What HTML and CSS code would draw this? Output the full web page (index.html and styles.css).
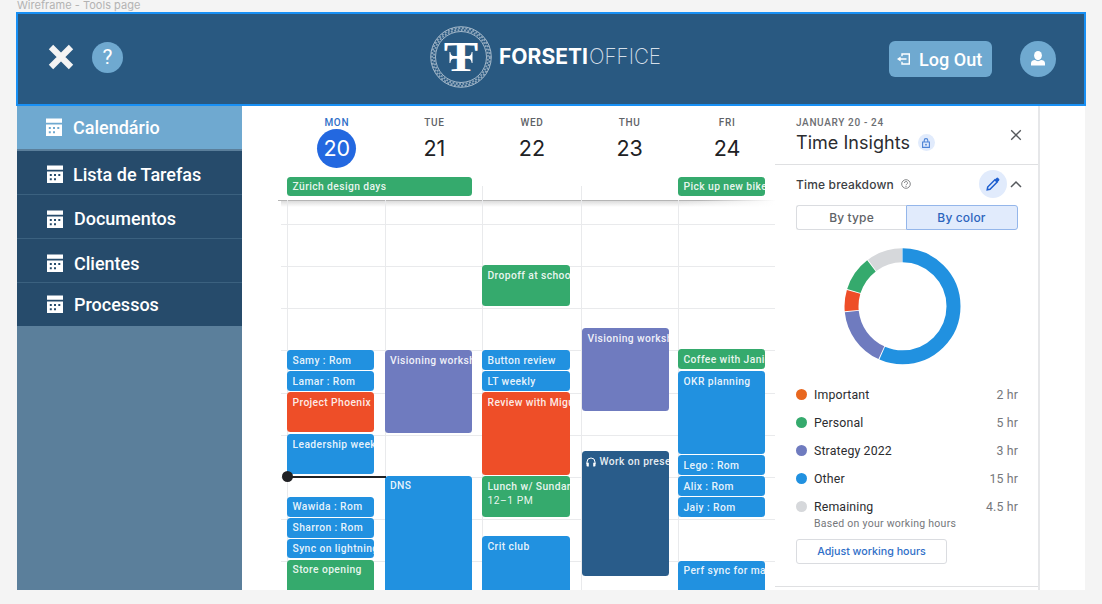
FILE: index.html
```html
<!DOCTYPE html>
<html lang="pt">
<head>
<meta charset="utf-8">
<title>Forseti Office</title>
<link rel="stylesheet" href="styles.css">
</head>
<body>
<svg class="defs" width="0" height="0" aria-hidden="true">
  <symbol id="table" viewBox="0 0 16 18">
    <path fill="#fff" fill-rule="evenodd" d="M0 .5h16v4.300H0zM0 6.500h16V18H0zM2.800 9h2v2h-2zM7 9h2v2H7zM11.300 9h2v2h-2zM2.800 13.200h2v2h-2zM7 13.200h2v2H7z"/>
  </symbol>
</svg>
<div class="frame-label">Wireframe - Tools page</div>
<header class="topbar">
  <svg class="close-menu" width="26" height="26" viewBox="0 0 26 26"><path d="M3 3 23 23M23 3 3 23" stroke="#f4f4f4" stroke-width="6.200" stroke-linejoin="round"/></svg>
  <span class="help">?</span>
  <svg class="logo" width="232" height="62" viewBox="0 0 232 62">
    <g fill="none" stroke="#c3d0dc">
      <circle cx="31" cy="31" r="30.300" stroke-width=".8"/>
      <circle cx="31" cy="31" r="25.500" stroke-width=".8"/>
      <circle cx="31" cy="31" r="28.900" stroke-width="1.800" stroke-dasharray="2 1.600" stroke-opacity=".65"/>
      <circle cx="31" cy="31" r="27" stroke-width="1.800" stroke-dasharray="1.870 1.500" stroke-dashoffset="1.500" stroke-opacity=".65"/>
    </g>
    <text class="logo-t" transform="translate(31 45) scale(1.230 1)" text-anchor="middle">T</text>
    <path fill="#fff" d="M19.500 26h.8q.6 4 3.200 4h15q2.600 0 3.200-4h.8v11h-.8q-.6-4.300-3.200-4.300h-15q-2.600 0-3.200 4.300h-.8z"/>
    <text class="logo-bold" x="69" y="37.600" textLength="89" lengthAdjust="spacingAndGlyphs">FORSETI</text>
    <text class="logo-thin" x="159" y="37.600" textLength="72" lengthAdjust="spacingAndGlyphs">OFFICE</text>
  </svg>
  <button class="logout">
    <svg width="14" height="12" viewBox="0 0 14 12"><path d="M5 3.200V1h7.300v10H5V8.800M9.500 6H2" fill="none" stroke="#fff" stroke-width="1.400"/><path d="M0 6l3.600-2.400v4.800z" fill="#fff"/></svg>
    <span>Log Out</span>
  </button>
  <span class="avatar">
    <svg width="14" height="15" viewBox="0 0 14 15"><ellipse cx="7" cy="4.600" rx="3.900" ry="4.600" fill="#fff"/><path d="M0 14.500v-2.300C0 10 2 9.200 4 9q3 2.300 6 0c2 .2 4 1 4 3.200v2.300z" fill="#fff"/></svg>
  </span>
</header>
<main class="page">
  <nav class="side">
    <a class="item active"><svg><use href="#table"/></svg>Calendário</a>
    <a class="item lista"><svg><use href="#table"/></svg>Lista de Tarefas</a>
    <a class="item"><svg><use href="#table"/></svg>Documentos</a>
    <a class="item"><svg><use href="#table"/></svg>Clientes</a>
    <a class="item last"><svg><use href="#table"/></svg>Processos</a>
  </nav>
  <section class="calendar">
    <div class="days">
      <div class="day today"><span>MON</span><b>20</b></div>
      <div class="day"><span>TUE</span><b>21</b></div>
      <div class="day"><span>WED</span><b>22</b></div>
      <div class="day"><span>THU</span><b>23</b></div>
      <div class="day"><span>FRI</span><b>24</b></div>
    </div>
    <div class="allday">
      <div class="ev green span">Zürich design days</div>
      <div class="tick"></div>
      <div class="tick"></div>
      <div class="ev green">Pick up new bike</div>
    </div>
    <div class="hours">
      <div class="col">
        <div class="ev blue" style="margin-top:150px;height:20px">Samy : Rom</div>
        <div class="ev blue" style="margin-top:1px;height:20px">Lamar : Rom</div>
        <div class="ev red" style="margin-top:1px;height:40px">Project Phoenix</div>
        <div class="ev blue" style="margin-top:2px;height:40px">Leadership week</div>
        <div class="now"><i></i></div>
        <div class="ev blue tight" style="margin-top:19px;height:20px">Wawida : Rom</div>
        <div class="ev blue tight" style="margin-top:1px;height:20px">Sharron : Rom</div>
        <div class="ev blue tight" style="margin-top:1px;height:19px">Sync on lightning</div>
        <div class="ev green cut tight" style="margin-top:2px;height:32px">Store opening</div>
      </div>
      <div class="col early">
        <div class="ev violet" style="margin-top:150px;height:83px">Visioning workshop</div>
        <div class="ev blue cut tight" style="margin-top:43px;height:115px">DNS</div>
      </div>
      <div class="col wide">
        <div class="ev green" style="margin-top:65px;height:41px">Dropoff at school</div>
        <div class="ev blue" style="margin-top:44px;height:20px">Button review</div>
        <div class="ev blue" style="margin-top:1px;height:20px">LT weekly</div>
        <div class="ev red" style="margin-top:1px;height:83px">Review with Miguel</div>
        <div class="ev green" style="margin-top:1px;height:41px">Lunch w/ Sundar<small>12–1 PM</small></div>
        <div class="ev blue cut" style="margin-top:19px;height:54px">Crit club</div>
      </div>
      <div class="col inset">
        <div class="ev violet" style="margin-top:128px;height:83px">Visioning workshop</div>
        <div class="ev navy" style="margin-top:40px;height:125px"><svg width="10" height="10" viewBox="0 0 10 10"><path d="M1 7V5a4 4 0 0 1 8 0v2" fill="none" stroke="#fff"/><path d="M.5 5.700h2.300V9.500H1.500a1 1 0 0 1-1-1zM9.500 5.700H7.200V9.500h1.300a1 1 0 0 0 1-1z" fill="#fff"/></svg>Work on presentation</div>
      </div>
      <div class="col">
        <div class="ev green" style="margin-top:149px;height:20px">Coffee with Janice</div>
        <div class="ev blue" style="margin-top:2px;height:83px">OKR planning</div>
        <div class="ev blue" style="margin-top:1px;height:20px">Lego : Rom</div>
        <div class="ev blue" style="margin-top:1px;height:20px">Alix : Rom</div>
        <div class="ev blue" style="margin-top:1px;height:20px">Jaiy : Rom</div>
        <div class="ev blue cut tight" style="margin-top:44px;height:29px">Perf sync for managers</div>
      </div>
    </div>
  </section>
  <aside class="insights">
    <div class="head">
      <div>
        <div class="range">JANUARY 20 - 24</div>
        <h2>Time Insights <span class="lock"><svg width="8" height="10" viewBox="0 0 8 10"><path d="M.6 4h6.800v5.400H.6zM2.200 4V2.400a1.800 1.800 0 0 1 3.600 0V4" fill="none" stroke="#4d83d6" stroke-width="1.100"/><circle cx="4" cy="6.700" r=".9" fill="#4d83d6"/></svg></span></h2>
      </div>
      <svg class="x" width="12" height="12" viewBox="0 0 12 12"><path d="M1.200 1.200l9.600 9.600M10.800 1.200l-9.600 9.600" stroke="#55585c" stroke-width="1.300"/></svg>
    </div>
    <div class="breakdown">
      <h3>Time breakdown</h3>
      <svg width="10" height="10" viewBox="0 0 10 10" fill="none" stroke="#77797c"><circle cx="5" cy="5" r="4.300" stroke-width=".9"/><path d="M3.500 4a1.500 1.500 0 1 1 2.300 1.200Q5 5.600 5 6.300M5 7v1" stroke-width=".9"/></svg>
      <span class="edit"><svg width="14" height="14" viewBox="0 0 14 14"><path d="M1.200 12.800l.5-2.800 7.200-7.200 2.300 2.300L4 12.300z" fill="none" stroke="#1f5fcf" stroke-width="1.500"/><path d="M8.800 2.600 10.500.9q.8-.7 1.600 0l1 1q.7.800 0 1.600l-1.700 1.700z" fill="#1f5fcf"/></svg></span>
      <svg class="chev" width="12" height="8" viewBox="0 0 12 8"><path d="M1 7l5-5 5 5" fill="none" stroke="#55585c" stroke-width="1.500"/></svg>
    </div>
    <div class="toggle"><span>By type</span><span class="on">By color</span></div>
    <svg class="donut" width="118" height="118" viewBox="-59.500 -59.300 118 118">
      <g fill="none" stroke-width="14" transform="rotate(-90)">
        <circle r="51" pathLength="360" stroke="#2191e0" stroke-dasharray="203.500 156.500"/>
        <circle r="51" pathLength="360" stroke="#6f7bbf" stroke-dasharray="59.500 300.500" stroke-dashoffset="-204.500"/>
        <circle r="51" pathLength="360" stroke="#ee4e28" stroke-dasharray="21.500 338.500" stroke-dashoffset="-265"/>
        <circle r="51" pathLength="360" stroke="#35aa6d" stroke-dasharray="35 325" stroke-dashoffset="-287.500"/>
        <circle r="51" pathLength="360" stroke="#d6d8db" stroke-dasharray="36 324" stroke-dashoffset="-323.500"/>
      </g>
    </svg>
    <ul class="legend">
      <li><i class="orange"></i>Important<em>2 hr</em></li>
      <li><i class="green"></i>Personal<em>5 hr</em></li>
      <li><i class="violet"></i>Strategy 2022<em>3 hr</em></li>
      <li><i class="blue"></i>Other<em>15 hr</em></li>
      <li><i class="grey"></i>Remaining<em>4.5 hr</em></li>
    </ul>
    <p class="note">Based on your working hours</p>
    <button class="adjust">Adjust working hours</button>
    <div class="rule"></div>
  </aside>
</main>
</body>
</html>
```

FILE: styles.css
```css
* { box-sizing: border-box; }
body { margin: 0; width: 1102px; height: 604px; overflow: hidden; background: #f4f4f4; font-family: Roboto, sans-serif; }
button { font: inherit; margin: 0; padding: 0; }
.defs { display: block; }
.frame-label { height: 12px; padding-left: 17px; font: 11px/11px Inter, sans-serif; letter-spacing: .03px; color: #b3b3b3; }
.topbar { display: flex; align-items: center; width: 1070px; height: 94px; margin-left: 16px; padding: 0 28px 0 30px; border: 2px solid #1890f5; background: #295981; }
.close-menu { margin: 0 0 4px 0; }
.help { width: 31px; height: 31px; margin: 0 0 4px 18px; border-radius: 50%; background: #6fa9d0; color: #fff; font-size: 21px; line-height: 30px; text-align: center; }
.logo { margin: 0 0 4px 307px; }
.logo-t { font: bold 42px "Liberation Serif", serif; fill: #fff; }
.logo-bold { font: 700 21px Inter, sans-serif; fill: #fff; }
.logo-thin { font: 200 21px Inter, sans-serif; fill: #d5dfe8; }
.logout { display: flex; align-items: center; width: 103px; height: 36px; margin-left: auto; padding-left: 8px; gap: 8px; border: 0; border-radius: 6px; background: #6fa9d0; color: #fff; font-size: 18px; font-weight: 500; letter-spacing: .05px; white-space: nowrap; }
.avatar { display: flex; justify-content: center; width: 36px; height: 36px; margin-left: 28px; padding-top: 10px; border-radius: 50%; background: #6fa9d0; }
.page { display: flex; width: 1068px; height: 484px; margin-left: 17px; background: #fff; }

.side { width: 225px; background: #5b7f9b; }
.item { display: flex; align-items: center; height: 44px; padding: 4px 0 0 30px; gap: 11px; background: #264b6b; border-bottom: 1px solid #3b617f; color: #fff; font-size: 18px; font-weight: 500; letter-spacing: 0; }
.item svg { width: 16px; height: 18px; }
.item + .item + .item + .item { padding-top: 5px; }
.item.active { height: 45px; padding: 0 0 1px 29px; background: #6fa9d0; border-bottom: 2px solid #5b7f9b; }
.item.lista { gap: 10px; padding-top: 3px; }
.side .item.item.last { height: 43px; padding: 0 0 1px 30px; border: 0; }

.calendar { width: 533px; height: 484px; overflow: hidden; padding-left: 36px; }
.days { display: grid; grid-template-columns: repeat(5, 97.600px); height: 71px; padding: 10px 0 0 10px; text-align: center; }
.day span { display: block; font-size: 10px; font-weight: 500; line-height: 13px; letter-spacing: .7px; color: #5f6368; }
.day b { display: block; width: 39px; height: 39px; margin: 0 auto; border-radius: 50%; font: 400 21.500px/39px Inter, sans-serif; color: #202124; }
.today span { color: #2f6fc8; }
.today b { background: #2368e0; color: #fff; }
.allday { display: grid; grid-template-columns: 195px 99px 97px 97px; height: 24px; padding-left: 9px; border-bottom: 1px solid #bdbdbd; border-image: linear-gradient(90deg, #b5b5b5 85%, #fff) 1; }
.tick { align-self: end; height: 14px; border-left: 1px solid #e9eaec; }
.hours { display: grid; grid-template-columns: 98px 97px 99px 97px 97px; height: 390px; margin-left: 3px; padding-left: 6px; margin-top: -1px; background: linear-gradient(90deg, rgba(255,255,255,0) 80%, #fff) 0 1px / 100% 6px no-repeat, linear-gradient(#dcdcdc, rgba(255,255,255,0)) 0 1px / 100% 6px no-repeat, repeating-linear-gradient(#e9eaec 0 1px, transparent 1px 42.130px) 0 24px / 100% 366px no-repeat; }
.col { border-left: 1px solid #e9eaec; min-width: 0; }
.ev { width: 87px; margin-left: -1px; overflow: hidden; padding-left: 5.500px; border-radius: 3.500px; color: rgba(255,255,255,.9); font-size: 10.300px; font-weight: 500; line-height: 21px; letter-spacing: .4px; white-space: nowrap; }
.allday .ev { height: 19px; margin: 0; line-height: 19px; }
.allday .span { width: 185px; }
.ev small { display: block; margin-top: -7px; font-size: 10.300px; font-weight: 400; letter-spacing: .5px; }
.ev svg { margin: 0 4px 0 -2px; vertical-align: -1.500px; }
.early .ev { padding-left: 5px; }
.ev.tight { line-height: 19px; }
.wide .ev { width: 88px; }
.inset .ev { margin-left: 0; }
.ev.cut { border-radius: 3.500px 3.500px 0 0; }
.now { position: relative; width: 98px; height: 2px; margin-top: 2px; background: #202124; }
.now i { position: absolute; left: -6px; top: -5px; width: 11px; height: 11px; border-radius: 50%; background: #202124; }
.blue { background: #2191e0; }
.green { background: #35aa6d; }
.red { background: #ee4e28; }
.violet { background: #6f7bbf; }
.navy { background: #295c8a; }
.orange { background: #e8671f; }
.grey { background: #d6d8db; }

.insights { width: 265px; padding-left: 21px; border-right: 2px solid #e6e7e9; }
.head { display: flex; justify-content: space-between; height: 59px; margin-left: -21px; padding: 10px 16px 0 21px; border-bottom: 1px solid #dfe0e2; }
.range { font-size: 10px; font-weight: 500; line-height: 13px; letter-spacing: .65px; color: #6b6e72; }
h2 { display: flex; align-items: center; gap: 8px; margin: 0; font: 400 18px/27px Inter, sans-serif; color: #2b2c2f; letter-spacing: .03px; }
.lock { display: flex; align-items: center; justify-content: center; width: 17px; height: 17px; border-radius: 50%; background: #e1ebfc; }
.x { margin-top: 13px; }
.breakdown { display: flex; align-items: center; height: 38px; padding-right: 16px; }
h3 { margin: 0 7px 0 0; font: 500 12px Inter, sans-serif; letter-spacing: .16px; color: #3c4043; }
.edit { display: flex; align-items: center; justify-content: center; width: 28px; height: 28px; margin-left: auto; border-radius: 50%; background: #e1ebfc; }
.chev { margin-left: 3px; }
.toggle { display: grid; grid-template-columns: 110px 112px; width: 222px; height: 25px; margin-top: 2px; font: 500 12px/23px Inter, sans-serif; letter-spacing: .15px; text-align: center; color: #5f6368; }
.toggle span { border: 1px solid #dadce0; border-right: 0; border-radius: 3px 0 0 3px; }
.toggle .on { border: 1px solid #94b6ea; border-radius: 0 3px 3px 0; background: #e1ebfc; color: #2c64bd; padding-right: 1px; }
.donut { display: block; margin: 17px 0 0 47px; }
.legend { list-style: none; margin: 15px 0 0; padding: 0 20px 0 0; }
.legend li { display: flex; align-items: center; height: 28px; padding-top: 1px; font-size: 12.300px; letter-spacing: .15px; color: #2b2c2f; }
.legend i { width: 11px; height: 11px; margin-right: 7px; border-radius: 50%; }
.legend em { margin-left: auto; font-style: normal; color: #75777b; }
.note { margin: -4px 0 0 18px; font-size: 10.500px; line-height: 15px; letter-spacing: .26px; color: #75777b; }
.adjust { display: block; width: 151px; height: 25px; margin-top: 8px; border: 1px solid #dadce0; border-radius: 3px; background: #fff; font: 500 10.700px Inter, sans-serif; color: #2f6fc8; }
.rule { height: 1px; margin: 22px 0 0 -21px; background: #dfe0e2; }
```
